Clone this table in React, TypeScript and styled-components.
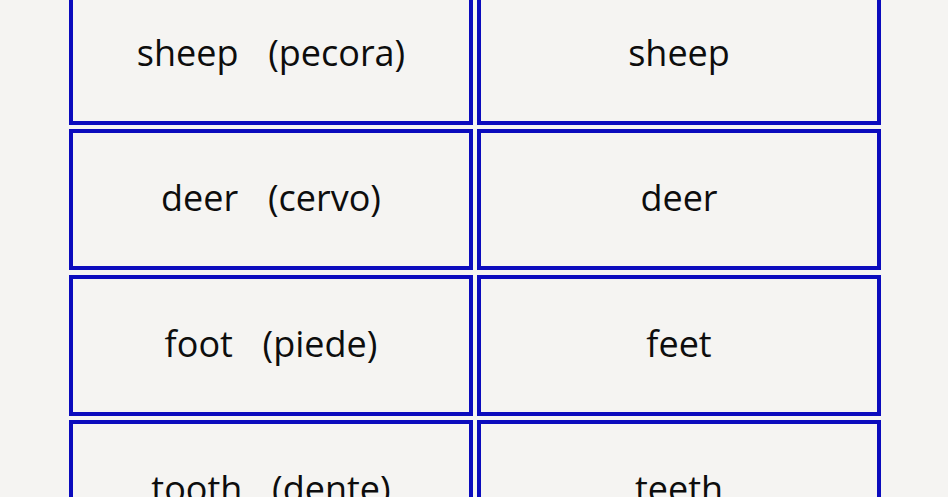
import React from "react";
import styled, { createGlobalStyle } from "styled-components";

const Global = createGlobalStyle`
  html, body { margin: 0; padding: 0; background: #f5f4f2; overflow: hidden; }
`;

const Page = styled.div`
  width: 948px;
  height: 497px;
  overflow: hidden;
  display: flex;
  justify-content: flex-start;
  padding-left: 69px;
  box-sizing: border-box;
`;

const Grid = styled.div`
  margin-top: -16.5px;
  display: grid;
  grid-template-columns: 404px 404px;
  grid-auto-rows: 141px;
  column-gap: 4px;
  row-gap: 4.5px;
`;

const Cell = styled.div`
  border: 4px solid #0b0bbd;
  box-sizing: border-box;
  display: flex;
  align-items: center;
  justify-content: center;
  font-family: "Open Sans", "Segoe UI", sans-serif;
  font-size: 36px;
  color: #0d0d0d;
  white-space: pre;
  word-spacing: 5.5px;
  padding-bottom: 4px;
`;

const rows: [string, string][] = [
  ["sheep  (pecora)", "sheep"],
  ["deer  (cervo)", "deer"],
  ["foot  (piede)", "feet"],
  ["tooth  (dente)", "teeth"],
];

export default function App() {
  return (
    <>
      <Global />
      <Page>
        <Grid>
          {rows.map(([a, b]) => (
            <React.Fragment key={a}>
              <Cell>{a}</Cell>
              <Cell>{b}</Cell>
            </React.Fragment>
          ))}
        </Grid>
      </Page>
    </>
  );
}
